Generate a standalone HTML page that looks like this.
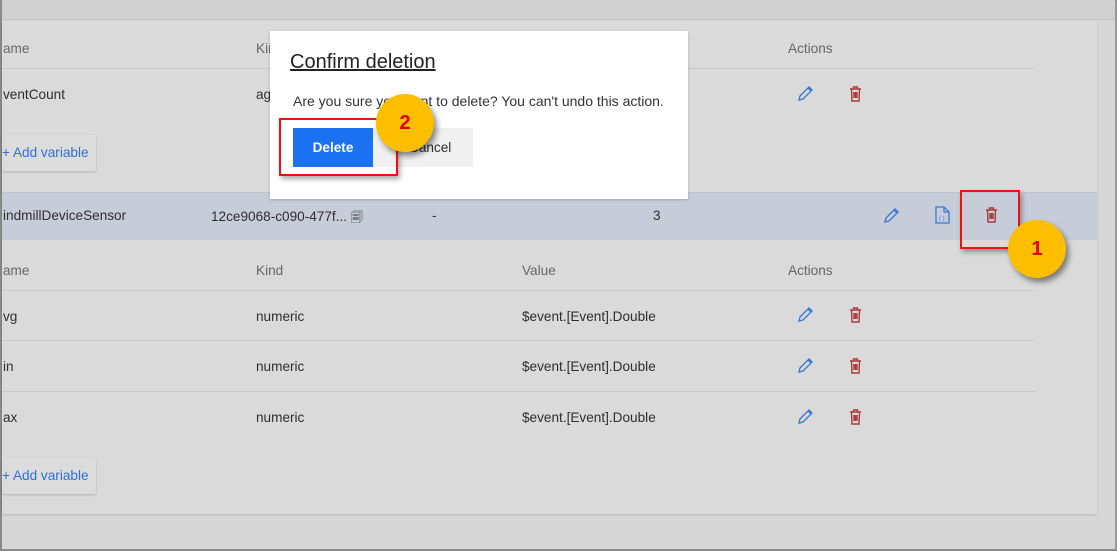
<!DOCTYPE html>
<html><head><style>
*{margin:0;padding:0;box-sizing:border-box}
body{width:1117px;height:551px;background:#d6d6d6;font-family:"Liberation Sans",sans-serif;position:relative;overflow:hidden;font-size:13.6px;color:#2e2e2e}
.a{position:absolute;white-space:nowrap}
.h{color:#666}
.line{position:absolute;height:1px;background:#c9c9c9}
.btn{position:absolute;background:#dcdcdc;box-shadow:0 1px 2px rgba(0,0,0,.18);color:#2f6fd6;border-radius:2px}
.circ{position:absolute;width:58px;height:58px;border-radius:50%;background:#fdbe00;box-shadow:3px 4px 6px rgba(0,0,0,.45);color:#e00000;font-weight:bold;font-size:20px;text-align:center;line-height:58px}
.rb{position:absolute;border:2px solid #f01010;box-shadow:2px 3px 5px rgba(0,0,0,.35)}
</style></head><body>
<div class="a" style="left:0;top:0;width:1117px;height:551px;border:2px solid #8a8a8a;border-right:2px solid #999"></div>
<div class="a" style="left:2px;top:0;width:1113px;height:20px;background:#d0d0d0;border-bottom:1px solid #c4c4c4"></div>
<div class="a" style="left:2px;top:21px;width:1095px;height:493px;background:#dadada;box-shadow:0 1px 2px rgba(0,0,0,.15)"></div>

<div class="a h" style="left:3px;top:41px">ame</div>
<div class="a h" style="left:256px;top:41px">Kind</div>
<div class="a h" style="left:788px;top:41px">Actions</div>
<div class="line" style="left:2px;top:68px;width:1033px"></div>
<div class="a" style="left:3px;top:87px">ventCount</div>
<div class="a" style="left:256px;top:87px">ag</div>
<div class="btn" style="left:2px;top:135px;width:94px;height:36px"><span class="a" style="left:0;top:10px">+ Add variable</span></div>

<div class="a" style="left:2px;top:192px;width:1095px;height:48px;background:#c6cdd9;border-top:1px solid #bcc3cf"></div>
<div class="a" style="left:3px;top:208px">indmillDeviceSensor</div>
<div class="a" style="left:211px;top:208px">12ce9068-c090-477f... <span style="font-size:12px">&#x1F5D0;</span></div>
<div class="a" style="left:432px;top:208px">-</div>
<div class="a" style="left:653px;top:208px">3</div>

<div class="a h" style="left:3px;top:263px">ame</div>
<div class="a h" style="left:256px;top:263px">Kind</div>
<div class="a h" style="left:522px;top:263px">Value</div>
<div class="a h" style="left:788px;top:263px">Actions</div>
<div class="line" style="left:2px;top:290px;width:1033px"></div>
<div class="a" style="left:3px;top:309px">vg</div><div class="a" style="left:256px;top:309px">numeric</div><div class="a" style="left:522px;top:309px">$event.[Event].Double</div>
<div class="line" style="left:2px;top:340px;width:1033px"></div>
<div class="a" style="left:3px;top:359px">in</div><div class="a" style="left:256px;top:359px">numeric</div><div class="a" style="left:522px;top:359px">$event.[Event].Double</div>
<div class="line" style="left:2px;top:391px;width:1033px"></div>
<div class="a" style="left:3px;top:410px">ax</div><div class="a" style="left:256px;top:410px">numeric</div><div class="a" style="left:522px;top:410px">$event.[Event].Double</div>
<div class="btn" style="left:2px;top:458px;width:94px;height:36px"><span class="a" style="left:0;top:10px">+ Add variable</span></div>

<svg class="a" style="left:0;top:0" width="1117" height="551">
<defs>
<g id="pen"><path d="M2 15 L3 11 L12 2 L15 5 L6 14 Z M11 3 L14 6" fill="none" stroke="#3d78d8" stroke-width="1.4"/></g>
<g id="bin"><path d="M3 4 H14 M6.5 4 V2 H10.5 V4 M4.5 4 L5 16 H12 L12.5 4 M7 7 V13 M8.5 7 V13 M10 7 V13" fill="none" stroke="#a83a3a" stroke-width="1.4"/></g>
</defs>
<use href="#pen" x="797" y="85"/><use href="#bin" x="847" y="85"/>
<use href="#pen" x="883" y="207"/>
<path d="M936 207 H944 L949 212 V223 H936 Z M944 207 V212 H949" fill="none" stroke="#3d78d8" stroke-width="1.3"/>
<text x="939" y="220" font-size="6" fill="#3d78d8" font-family="Liberation Sans">( )</text>
<use href="#bin" x="983" y="206"/>
<use href="#pen" x="797" y="306"/><use href="#bin" x="847" y="306"/>
<use href="#pen" x="797" y="357"/><use href="#bin" x="847" y="357"/>
<use href="#pen" x="797" y="408"/><use href="#bin" x="847" y="408"/>
</svg>

<div class="a" style="left:270px;top:31px;width:418px;height:168px;background:#fff;box-shadow:0 1px 3px rgba(0,0,0,.2)"></div>
<div class="a" style="left:290px;top:51px;font-size:20px;text-decoration:underline;color:#222">Confirm deletion</div>
<div class="a" style="left:293px;top:93px;font-size:14px;color:#333">Are you sure you want to delete? You can't undo this action.</div>
<div class="a" style="left:373px;top:128px;width:100px;height:39px;background:#f0f0f0"><span class="a" style="left:36px;top:12px">Cancel</span></div>
<div class="a" style="left:293px;top:128px;width:80px;height:39px;background:#1b72f0;color:#fff;font-weight:bold;text-align:center;line-height:39px">Delete</div>
<div class="rb" style="left:279px;top:118px;width:119px;height:58px"></div>
<div class="circ" style="left:376px;top:94px">2</div>
<div class="rb" style="left:960px;top:190px;width:60px;height:59px"></div>
<div class="circ" style="left:1008px;top:220px">1</div>
</body></html>
